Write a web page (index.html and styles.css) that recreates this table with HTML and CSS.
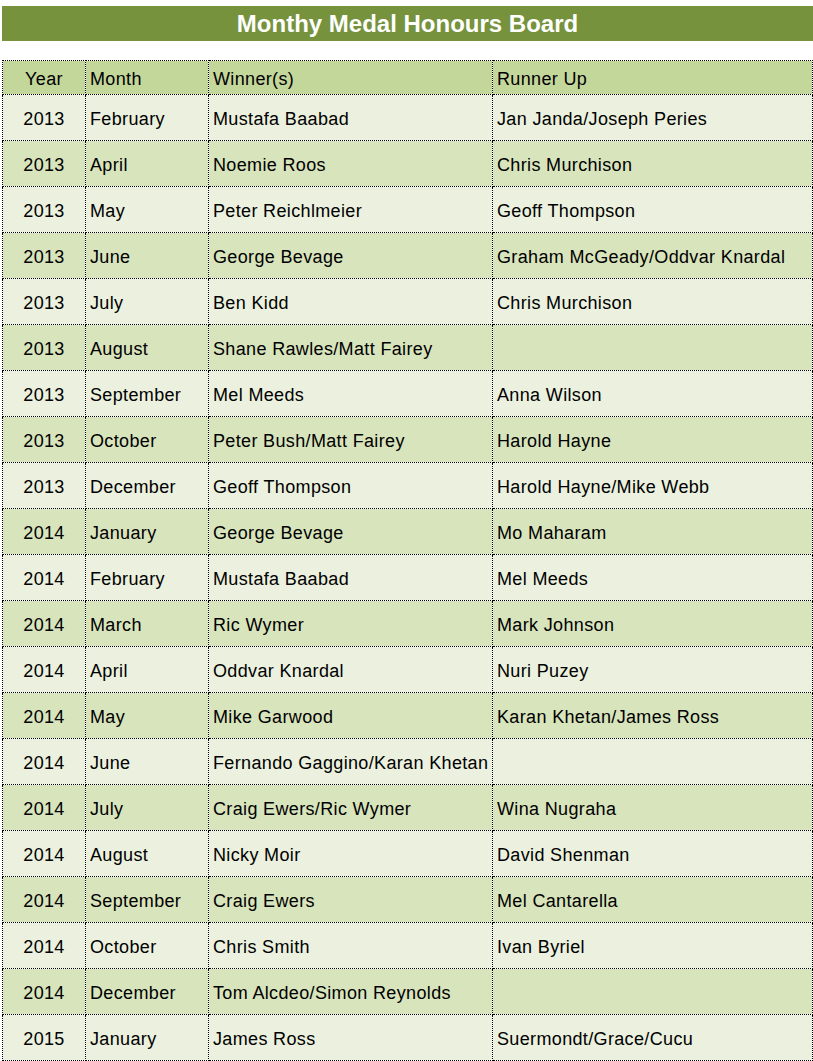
FILE: index.html
```html
<!DOCTYPE html>
<html>
<head>
<meta charset="utf-8">
<link rel="stylesheet" href="styles.css">
</head>
<body>
<div class="page">
  <h1 class="title">Monthy Medal Honours Board</h1>
  <table class="board">
    <colgroup>
      <col class="c-year"><col class="c-month"><col class="c-win"><col class="c-run">
    </colgroup>
    <thead>
      <tr><th class="year">Year</th><th>Month</th><th>Winner(s)</th><th>Runner Up</th></tr>
    </thead>
    <tbody>
      <tr><td class="year">2013</td><td>February</td><td>Mustafa Baabad</td><td>Jan Janda/Joseph Peries</td></tr>
      <tr><td class="year">2013</td><td>April</td><td>Noemie Roos</td><td>Chris Murchison</td></tr>
      <tr><td class="year">2013</td><td>May</td><td>Peter Reichlmeier</td><td>Geoff Thompson</td></tr>
      <tr><td class="year">2013</td><td>June</td><td>George Bevage</td><td>Graham McGeady/Oddvar Knardal</td></tr>
      <tr><td class="year">2013</td><td>July</td><td>Ben Kidd</td><td>Chris Murchison</td></tr>
      <tr><td class="year">2013</td><td>August</td><td>Shane Rawles/Matt Fairey</td><td></td></tr>
      <tr><td class="year">2013</td><td>September</td><td>Mel Meeds</td><td>Anna Wilson</td></tr>
      <tr><td class="year">2013</td><td>October</td><td>Peter Bush/Matt Fairey</td><td>Harold Hayne</td></tr>
      <tr><td class="year">2013</td><td>December</td><td>Geoff Thompson</td><td>Harold Hayne/Mike Webb</td></tr>
      <tr><td class="year">2014</td><td>January</td><td>George Bevage</td><td>Mo Maharam</td></tr>
      <tr><td class="year">2014</td><td>February</td><td>Mustafa Baabad</td><td>Mel Meeds</td></tr>
      <tr><td class="year">2014</td><td>March</td><td>Ric Wymer</td><td>Mark Johnson</td></tr>
      <tr><td class="year">2014</td><td>April</td><td>Oddvar Knardal</td><td>Nuri Puzey</td></tr>
      <tr><td class="year">2014</td><td>May</td><td>Mike Garwood</td><td>Karan Khetan/James Ross</td></tr>
      <tr><td class="year">2014</td><td>June</td><td>Fernando Gaggino/Karan Khetan</td><td></td></tr>
      <tr><td class="year">2014</td><td>July</td><td>Craig Ewers/Ric Wymer</td><td>Wina Nugraha</td></tr>
      <tr><td class="year">2014</td><td>August</td><td>Nicky Moir</td><td>David Shenman</td></tr>
      <tr><td class="year">2014</td><td>September</td><td>Craig Ewers</td><td>Mel Cantarella</td></tr>
      <tr><td class="year">2014</td><td>October</td><td>Chris Smith</td><td>Ivan Byriel</td></tr>
      <tr><td class="year">2014</td><td>December</td><td>Tom Alcdeo/Simon Reynolds</td><td></td></tr>
      <tr><td class="year">2015</td><td>January</td><td>James Ross</td><td>Suermondt/Grace/Cucu</td></tr>
    </tbody>
  </table>
</div>
</body>
</html>
```
FILE: styles.css
```css
html, body {
  margin: 0;
  padding: 0;
  background: #ffffff;
}
.page {
  padding: 6px 0 0 2px;
  font-family: "Liberation Sans", Arial, sans-serif;
  color: #000000;
}
.title {
  margin: 0;
  height: 35px;
  line-height: 35px;
  background: #76923c;
  color: #ffffff;
  font-size: 24px;
  font-weight: bold;
  text-align: center;
}
.board {
  margin-top: 19px;
  width: 811px;
  border-collapse: collapse;
  table-layout: fixed;
  font-size: 18px;
  letter-spacing: 0.35px;
}
.c-year { width: 83px; }
.c-month { width: 123px; }
.c-win { width: 284px; }
.c-run { width: 320px; }
.board th, .board td {
  border: 1px dotted #000000;
  padding: 4px 0 0 4px;
  text-align: left;
  font-weight: normal;
  white-space: nowrap;
  overflow: hidden;
  box-sizing: border-box;
}
.board th {
  height: 34px;
  background: #c4d79b;
}
.board td {
  height: 46px;
}
.board .year {
  text-align: center;
  padding-left: 0;
}
.board tbody tr:nth-child(odd) td { background: #ebf1de; }
.board tbody tr:nth-child(even) td { background: #d8e4bc; }
```
